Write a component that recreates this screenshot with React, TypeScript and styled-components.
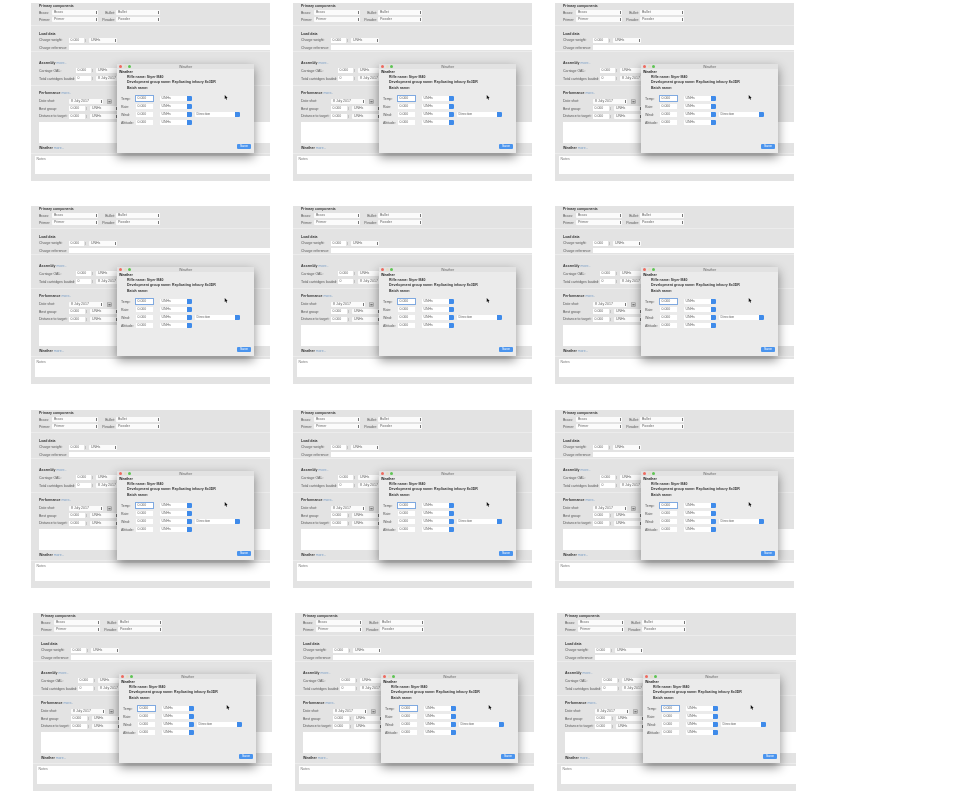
import { styled, createGlobalStyle } from "styled-components";

const GlobalStyle = createGlobalStyle`
  html, body {
    margin: 0;
    padding: 0;
    background: #fff;
    font-family: "Liberation Sans", Arial, sans-serif;
  }
`;

const Thumb = () => (
  <Panel>
    <Section $pad={1} $h={23}>
      <Title>Primary components</Title>
      <Row $h={7}>
        <Label $w={12}>Brass:</Label>
        <Picker $w={46}>Brass</Picker>
        <Label $w={16} $right>Bullet:</Label>
        <Picker $w={44}>Bullet</Picker>
      </Row>
      <Row $h={7}>
        <Label $w={12}>Primer:</Label>
        <Picker $w={46}>Primer</Picker>
        <Label $w={16} $right>Powder:</Label>
        <Picker $w={44}>Powder</Picker>
      </Row>
    </Section>
    <Section $pad={5.5} $h={26}>
      <Title>Load data</Title>
      <Row $h={7.5}>
        <Label $w={29}>Charge weight:</Label>
        <Field $w={15}>0.000</Field>
        <Spin />
        <Picker $w={28}>UNHs</Picker>
      </Row>
      <Row $h={7.5}>
        <Label $w={29}>Charge reference:</Label>
        <WideField />
      </Row>
    </Section>
    <Section $pad={8.5} $h={34}>
      <Title>
        Assembly <More>more..</More>
      </Title>
      <Row $h={8} $top={1}>
        <Label $w={36}>Carriage OAL:</Label>
        <Field $w={15}>0.000</Field>
        <Spin />
        <Picker $w={28}>UNHs</Picker>
      </Row>
      <Row $h={8}>
        <Label $w={36}>Total cartridges loaded:</Label>
        <Field $w={15}>0</Field>
        <Spin />
        <Picker $w={28}>8 July 2017</Picker>
      </Row>
    </Section>
    <Section $pad={4.5} $h={68} $flat>
      <Title>
        Performance <More>more..</More>
      </Title>
      <Row $h={8} $top={1.5}>
        <Label $w={29}>Date shot:</Label>
        <Picker $w={34}>8 July 2017</Picker>
        <CalendarIcon />
      </Row>
      <Row $h={7.5}>
        <Label $w={29}>Best group:</Label>
        <Field $w={16}>0.000</Field>
        <Spin />
        <Picker $w={28}>UNHs</Picker>
      </Row>
      <Row $h={7.5}>
        <Label $w={29}>Distance to target:</Label>
        <Field $w={16}>0.000</Field>
        <Spin />
        <Picker $w={28}>UNHs</Picker>
      </Row>
      <TextArea />
      <Title $top={2.5}>
        Weather <More>more..</More>
      </Title>
    </Section>
    <NotesArea>
      <Notes>Notes</Notes>
    </NotesArea>
    <WeatherDialog />
  </Panel>
);

const WeatherDialog = () => (
  <Dialog>
    <TitleBar>
      <Light $color="#ee6a5f" />
      <Light $color="#e4dfc8" />
      <Light $color="#5fc454" />
      <WindowName>Weather</WindowName>
    </TitleBar>
    <DialogBody>
      <DialogHeading>Weather</DialogHeading>
      <Info>Rifle name: Styer M40</Info>
      <Info>Development group name: Replicating infoury 8x3DR</Info>
      <Info>Batch name:</Info>
      <Rows>
        {["Temp:", "Rain:", "Wind:", "Altitude:"].map((name, i) => (
          <DialogRow key={name}>
            <DialogLabel>{name}</DialogLabel>
            <DialogField $focus={i === 0}>0.000</DialogField>
            <BlueSelect $w={32}>UNHs</BlueSelect>
            {name === "Wind:" && <BlueSelect $w={45} $left={3}>Direction</BlueSelect>}
          </DialogRow>
        ))}
      </Rows>
      <Footer>
        <SaveButton>Save</SaveButton>
      </Footer>
    </DialogBody>
    <Cursor viewBox="0 0 6 8">
      <path d="M1 0 L1 6.5 L2.6 5 L3.8 7.6 L4.8 7.1 L3.7 4.7 L5.6 4.6 Z" fill="#111" />
    </Cursor>
  </Dialog>
);

const CalendarIcon = () => (
  <CalendarBox viewBox="0 0 5 5">
    <rect x="0.5" y="0.8" width="4" height="3.7" fill="#d8d8d8" stroke="#888" strokeWidth="0.5" />
    <rect x="1.4" y="2" width="2.2" height="1.4" fill="#777" />
  </CalendarBox>
);

const rowOffsets = [
  { top: 3, left: 31 },
  { top: 25, left: 31 },
  { top: 26, left: 31 },
  { top: 25, left: 33 },
];

const App = () => (
  <>
    <GlobalStyle />
    <Sheet>
      {rowOffsets.map((row, i) => (
        <ThumbRow key={i} $top={row.top} $left={row.left}>
          <Thumb />
          <Thumb />
          <Thumb />
        </ThumbRow>
      ))}
    </Sheet>
  </>
);

export default App;

const Sheet = styled.div`
  width: 960px;
  height: 792px;
  overflow: hidden;
  background: #fff;
`;

const ThumbRow = styled.div<{ $top: number; $left: number }>`
  display: flex;
  gap: 23px;
  margin-top: ${(p) => p.$top}px;
  padding-left: ${(p) => p.$left}px;
`;

const Panel = styled.div`
  position: relative;
  flex: none;
  width: 239px;
  height: 178px;
  overflow: hidden;
  background: #e3e3e3;
  font-size: 3.5px;
  color: #444;
  filter: blur(0.25px);
`;

const Section = styled.div<{ $pad: number; $h: number; $flat?: boolean }>`
  box-sizing: border-box;
  height: ${(p) => p.$h}px;
  padding: ${(p) => p.$pad}px 0 0 8px;
  border-bottom: 1px solid ${(p) => (p.$flat ? "#ececec" : "#ececec")};
`;

const Title = styled.div<{ $top?: number }>`
  height: 5px;
  line-height: 5px;
  margin-top: ${(p) => p.$top ?? 0}px;
  font-weight: 700;
  color: #333;
`;

const More = styled.span`
  font-weight: 400;
  color: #7c9fc6;
`;

const Row = styled.div<{ $h: number; $top?: number }>`
  display: flex;
  align-items: center;
  height: ${(p) => p.$h}px;
  margin-top: ${(p) => p.$top ?? 0}px;
`;

const Label = styled.div<{ $w: number; $right?: boolean }>`
  flex: none;
  width: ${(p) => p.$w}px;
  padding-right: 1px;
  white-space: nowrap;
  text-align: ${(p) => (p.$right ? "right" : "left")};
  color: #555;
`;

const Picker = styled.div<{ $w: number }>`
  position: relative;
  box-sizing: border-box;
  flex: none;
  width: ${(p) => p.$w}px;
  height: 5px;
  line-height: 5px;
  padding-left: 2px;
  margin-right: 1px;
  background: #fbfbfb;
  border-radius: 1px;
  white-space: nowrap;
  overflow: hidden;
  color: #666;
  &::after {
    content: "";
    position: absolute;
    right: 1px;
    top: 1px;
    width: 0.7px;
    height: 3px;
    background: #777;
  }
`;

const Field = styled.div<{ $w: number }>`
  box-sizing: border-box;
  flex: none;
  width: ${(p) => p.$w}px;
  height: 5px;
  line-height: 5px;
  padding-left: 1.5px;
  background: #fff;
  color: #666;
`;

const Spin = styled.div`
  flex: none;
  width: 1px;
  height: 3px;
  margin: 0 3px 0 1px;
  background: #c4c4c4;
`;

const WideField = styled.div`
  flex: 1;
  height: 5px;
  background: #fff;
`;

const CalendarBox = styled.svg`
  width: 5px;
  height: 5px;
  margin-left: 3px;
`;

const TextArea = styled.div`
  height: 21px;
  margin-top: 2px;
  background: #fff;
`;

const NotesArea = styled.div`
  padding: 2px 0 0 4px;
`;

const Notes = styled.div`
  box-sizing: border-box;
  height: 18px;
  padding: 1px 0 0 1.5px;
  background: #fff;
  color: #777;
`;

const Dialog = styled.div`
  position: absolute;
  left: 86px;
  top: 61px;
  width: 137px;
  height: 89px;
  background: #ebebeb;
  box-shadow: 0 4px 10px rgba(0, 0, 0, 0.45);
`;

const TitleBar = styled.div`
  position: relative;
  display: flex;
  align-items: center;
  gap: 1.5px;
  height: 5px;
  padding-left: 2px;
  background: #e2e2e2;
`;

const Light = styled.span<{ $color: string }>`
  width: 3px;
  height: 3px;
  border-radius: 50%;
  background: ${(p) => p.$color};
`;

const WindowName = styled.span`
  position: absolute;
  left: 0;
  right: 0;
  text-align: center;
  color: #666;
`;

const DialogBody = styled.div`
  display: flex;
  flex-direction: column;
  height: 84px;
  padding: 0.5px 0 0 2px;
  box-sizing: border-box;
`;

const DialogHeading = styled.div`
  height: 5px;
  line-height: 5px;
  font-weight: 700;
  color: #222;
`;

const Info = styled.div`
  height: 5.5px;
  line-height: 5.5px;
  padding-left: 8px;
  font-weight: 700;
  color: #333;
`;

const Rows = styled.div`
  margin-top: 3.5px;
`;

const DialogRow = styled.div`
  display: flex;
  align-items: center;
  height: 8px;
`;

const DialogLabel = styled.div`
  flex: none;
  width: 17px;
  padding-left: 2px;
  box-sizing: border-box;
  color: #555;
`;

const DialogField = styled.div<{ $focus: boolean }>`
  box-sizing: border-box;
  flex: none;
  width: 17px;
  height: 5.5px;
  line-height: 5.5px;
  padding-left: 1.5px;
  margin-right: 7px;
  background: #fff;
  color: #666;
  box-shadow: ${(p) => (p.$focus ? "0 0 0 1px #7fa9e0" : "none")};
`;

const BlueSelect = styled.div<{ $w: number; $left?: number }>`
  position: relative;
  box-sizing: border-box;
  flex: none;
  width: ${(p) => p.$w}px;
  height: 5.5px;
  line-height: 5.5px;
  padding-left: 1.5px;
  margin-left: ${(p) => p.$left ?? 0}px;
  background: #fff;
  color: #666;
  border-radius: 1px;
  &::after {
    content: "";
    position: absolute;
    right: 0;
    top: 0;
    width: 5px;
    height: 100%;
    background: #3f8bea;
    border-radius: 0 1px 1px 0;
  }
`;

const Footer = styled.div`
  display: flex;
  justify-content: flex-end;
  margin-top: auto;
  padding: 0 3px 4px 0;
`;

const SaveButton = styled.div`
  width: 14px;
  height: 5px;
  line-height: 5px;
  text-align: center;
  background: #4a94ee;
  color: #fff;
  border-radius: 1px;
`;

const Cursor = styled.svg`
  position: absolute;
  left: 107px;
  top: 31px;
  width: 4px;
  height: 5px;
`;
